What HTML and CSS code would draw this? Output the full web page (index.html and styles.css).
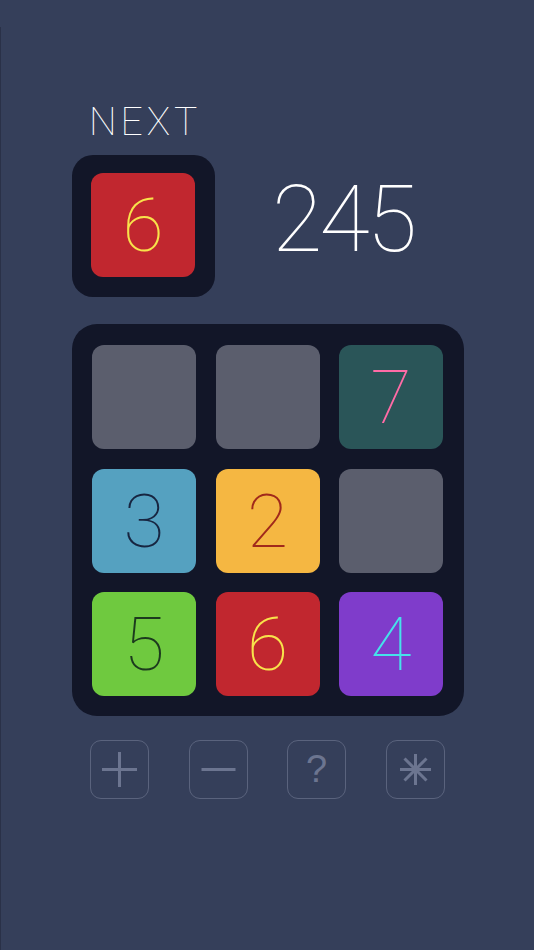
FILE: index.html
```html
<!DOCTYPE html>
<html lang="en">
<head>
<meta charset="utf-8">
<title>Threes-like</title>
<link rel="stylesheet" href="styles.css">
</head>
<body>
<div class="page">
  <header class="top">
    <div class="next-col">
      <div class="next-label">NEXT</div>
      <div class="next-box">
        <div class="tile red"><span>6</span></div>
      </div>
    </div>
    <div class="score">245</div>
  </header>

  <main class="board">
    <div class="tile empty"></div>
    <div class="tile empty"></div>
    <div class="tile teal"><span>7</span></div>
    <div class="tile blue"><span>3</span></div>
    <div class="tile orange"><span>2</span></div>
    <div class="tile empty"></div>
    <div class="tile green"><span>5</span></div>
    <div class="tile red"><span>6</span></div>
    <div class="tile purple"><span>4</span></div>
  </main>

  <nav class="tools">
    <button class="tool" aria-label="plus">
      <svg width="59" height="59" viewBox="0 0 59 59"><path d="M12 29.5H47M29.5 12V47" /></svg>
    </button>
    <button class="tool" aria-label="minus">
      <svg width="59" height="59" viewBox="0 0 59 59"><path d="M12.5 29.5H46.5" /></svg>
    </button>
    <button class="tool q" aria-label="help"><span>?</span></button>
    <button class="tool" aria-label="star">
      <svg width="59" height="59" viewBox="0 0 59 59"><path d="M14 29.5H45M29.5 14V45M18.5 18.5L40.5 40.5M40.5 18.5L18.5 40.5" /></svg>
    </button>
  </nav>
</div>
</body>
</html>
```

FILE: styles.css
```css
html, body {
  margin: 0;
  padding: 0;
  background: #353f5a;
}
body {
  font-family: "Roboto", "Lato", "Liberation Sans", sans-serif;
  width: 534px;
  height: 950px;
  overflow: hidden;
}
.page {
  margin-top: 27px;
  height: 923px;
  border-left: 1px solid #2a3148;
  box-sizing: border-box;
  padding-left: 71px;
  display: flex;
  flex-direction: column;
}
.top {
  display: flex;
  align-items: flex-end;
  margin-top: 78px;
}
.next-col {
  display: flex;
  flex-direction: column;
  width: 143px;
}
.next-label {
  color: #ffffff;
  font-weight: 100;
  font-size: 39px;
  line-height: 44px;
  letter-spacing: 4px;
  margin-left: 17px;
  height: 50px;
  position: relative;
  top: -5px;
}
.next-box {
  background: #121628;
  border-radius: 21px;
  width: 143px;
  height: 142px;
  box-sizing: border-box;
  padding: 18px 19px;
}
.score {
  color: #ffffff;
  font-weight: 100;
  font-size: 92px;
  letter-spacing: -3px;
  line-height: 142px;
  height: 142px;
  margin-left: 57px;
  position: relative;
  top: -6px;
}
.board {
  margin-top: 27px;
  width: 392px;
  height: 392px;
  box-sizing: border-box;
  background: #121628;
  border-radius: 25px;
  padding: 21px 20px 20px 20px;
  display: grid;
  grid-template-columns: repeat(3, 104px);
  grid-template-rows: repeat(3, 104px);
  column-gap: 19.5px;
  row-gap: 19.5px;
}
.tile {
  width: 104px;
  height: 104px;
  border-radius: 12px;
  display: flex;
  align-items: center;
  justify-content: center;
  font-weight: 100;
  font-size: 75px;
  line-height: 1;
}
.tile span {
  display: block;
  margin-top: 1px;
}
.empty { background: #5b5e6d; }
.teal { background: #2a5558; color: #ff6ba6; }
.blue { background: #55a1c0; color: #172540; }
.orange { background: #f5b742; color: #a1291b; }
.green { background: #6fc93f; color: #1c3a1e; }
.red { background: #c1272f; color: #f8e34b; }
.purple { background: #7f3ccb; color: #46e2ea; }

.tools {
  display: flex;
  gap: 39.5px;
  margin-top: 24px;
  margin-left: 18px;
}
.tool {
  width: 59px;
  height: 59px;
  padding: 0;
  border: 1.5px solid #5a637d;
  border-radius: 11px;
  background: transparent;
  box-sizing: border-box;
  display: flex;
  align-items: center;
  justify-content: center;
  overflow: hidden;
}
.tool svg {
  flex: none;
  display: block;
}
.tool path {
  fill: none;
  stroke: #6c7590;
  stroke-width: 3;
}
.q span {
  color: #6c7590;
  font-family: "Liberation Sans", sans-serif;
  font-size: 38px;
  line-height: 1;
  margin-top: -2px;
}
```
